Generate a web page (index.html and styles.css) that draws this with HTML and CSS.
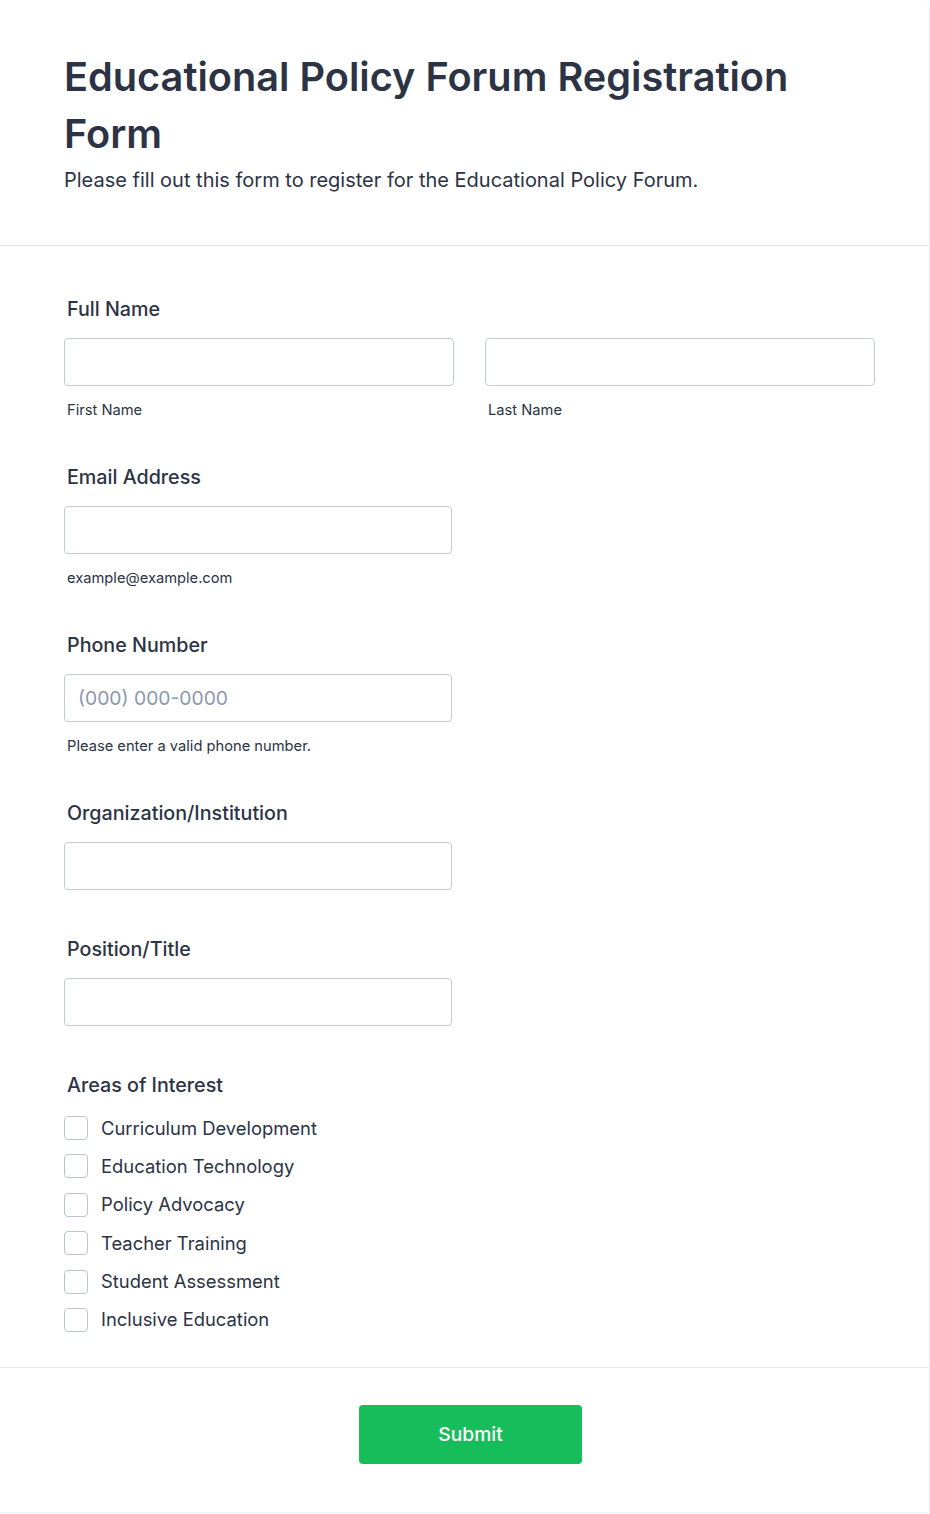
FILE: index.html
```html
<!DOCTYPE html>
<html lang="en">
<head>
<meta charset="utf-8">
<title>Educational Policy Forum Registration Form</title>
<link rel="stylesheet" href="styles.css">
</head>
<body>
<form class="card">
  <header class="form-header">
    <h1 class="title">Educational Policy Forum Registration Form</h1>
    <p class="subtitle">Please fill out this form to register for the Educational Policy Forum.</p>
  </header>
  <div class="form-body">
    <div class="field">
      <label class="label">Full Name</label>
      <div class="name-grid">
        <div class="name-col">
          <input class="input input-full" type="text">
          <span class="sublabel">First Name</span>
        </div>
        <div class="name-col">
          <input class="input input-full" type="text">
          <span class="sublabel">Last Name</span>
        </div>
      </div>
    </div>
    <div class="field">
      <label class="label">Email Address</label>
      <input class="input" type="email">
      <span class="sublabel">example@example.com</span>
    </div>
    <div class="field">
      <label class="label">Phone Number</label>
      <input class="input" type="tel" placeholder="(000) 000-0000">
      <span class="sublabel">Please enter a valid phone number.</span>
    </div>
    <div class="field field-plain">
      <label class="label">Organization/Institution</label>
      <input class="input" type="text">
    </div>
    <div class="field field-plain">
      <label class="label">Position/Title</label>
      <input class="input" type="text">
    </div>
    <div class="field field-last">
      <label class="label">Areas of Interest</label>
      <div class="options">
        <label class="option"><span class="box"></span><span class="option-text">Curriculum Development</span></label>
        <label class="option"><span class="box"></span><span class="option-text">Education Technology</span></label>
        <label class="option"><span class="box"></span><span class="option-text">Policy Advocacy</span></label>
        <label class="option"><span class="box"></span><span class="option-text">Teacher Training</span></label>
        <label class="option"><span class="box"></span><span class="option-text">Student Assessment</span></label>
        <label class="option"><span class="box"></span><span class="option-text">Inclusive Education</span></label>
      </div>
    </div>
  </div>
  <footer class="form-footer">
    <button class="submit" type="button">Submit</button>
  </footer>
</form>
</body>
</html>
```

FILE: styles.css
```css
* { box-sizing: border-box; }

html, body {
  margin: 0;
  padding: 0;
  background: #ffffff;
}

body {
  font-family: "Inter", "Noto Sans", sans-serif;
  color: #2c3345;
}

.card {
  width: 930px;
  border-right: 1px solid #f1f2f8;
  border-bottom: 1px solid #f1f2f8;
  border-top-right-radius: 6px;
  background: #ffffff;
}

.form-header {
  padding: 49px 52px 51px 64px;
  border-bottom: 1px solid #dfe0ea;
}

.title {
  margin: 0;
  font-size: 39.7px;
  line-height: 57px;
  font-weight: 600;
  color: #2c3345;
}

.subtitle {
  margin: 4px 0 0 0;
  font-size: 20px;
  line-height: 27px;
  font-weight: 400;
  color: #2c3345;
}

.form-body {
  padding: 50px 53px 35px 64px;
  border-bottom: 1px solid #e6e7ef;
}

.field {
  display: flex;
  flex-direction: column;
  align-items: flex-start;
  margin-bottom: 44px;
}

.field-plain { margin-bottom: 46px; }
.field-last { margin-bottom: 0; }

.label {
  display: block;
  padding-left: 3px;
  font-size: 19.7px;
  line-height: 26px;
  font-weight: 500;
  color: #2c3345;
  margin-bottom: 16px;
}

.name-grid {
  display: grid;
  grid-template-columns: 390px 390px;
  column-gap: 31px;
}

.name-col {
  display: flex;
  flex-direction: column;
}

.input {
  width: 388px;
  height: 48px;
  border: 1px solid #c3cad8;
  border-radius: 4px;
  background: #ffffff;
  padding: 0 13px;
  font-family: "Inter", "Noto Sans", sans-serif;
  font-size: 19.3px;
  color: #2c3345;
  outline: none;
}

.input-full { width: 390px; }

.input::placeholder {
  color: #8c97ad;
}

.sublabel {
  display: block;
  margin-top: 14px;
  padding-left: 3px;
  font-size: 14.7px;
  line-height: 20px;
  color: #2c3345;
}

.options {
  display: flex;
  flex-direction: column;
  gap: 14.4px;
  margin-top: 2px;
}

.option {
  display: flex;
  align-items: center;
  height: 24px;
}

.box {
  width: 24px;
  height: 24px;
  border: 1px solid #bcc3d2;
  border-radius: 4px;
  background: #ffffff;
  flex: none;
}

.option-text {
  margin-left: 13px;
  margin-bottom: 1px;
  font-size: 18.4px;
  line-height: 24px;
  color: #2c3345;
}

.form-footer {
  display: flex;
  justify-content: center;
  padding: 37px 52px 48px 64px;
}

.submit {
  width: 223px;
  height: 59px;
  border: none;
  border-radius: 4px;
  background: #18bd5b;
  color: #ffffff;
  font-family: "Inter", "Noto Sans", sans-serif;
  font-size: 19.3px;
  font-weight: 500;
}
```
